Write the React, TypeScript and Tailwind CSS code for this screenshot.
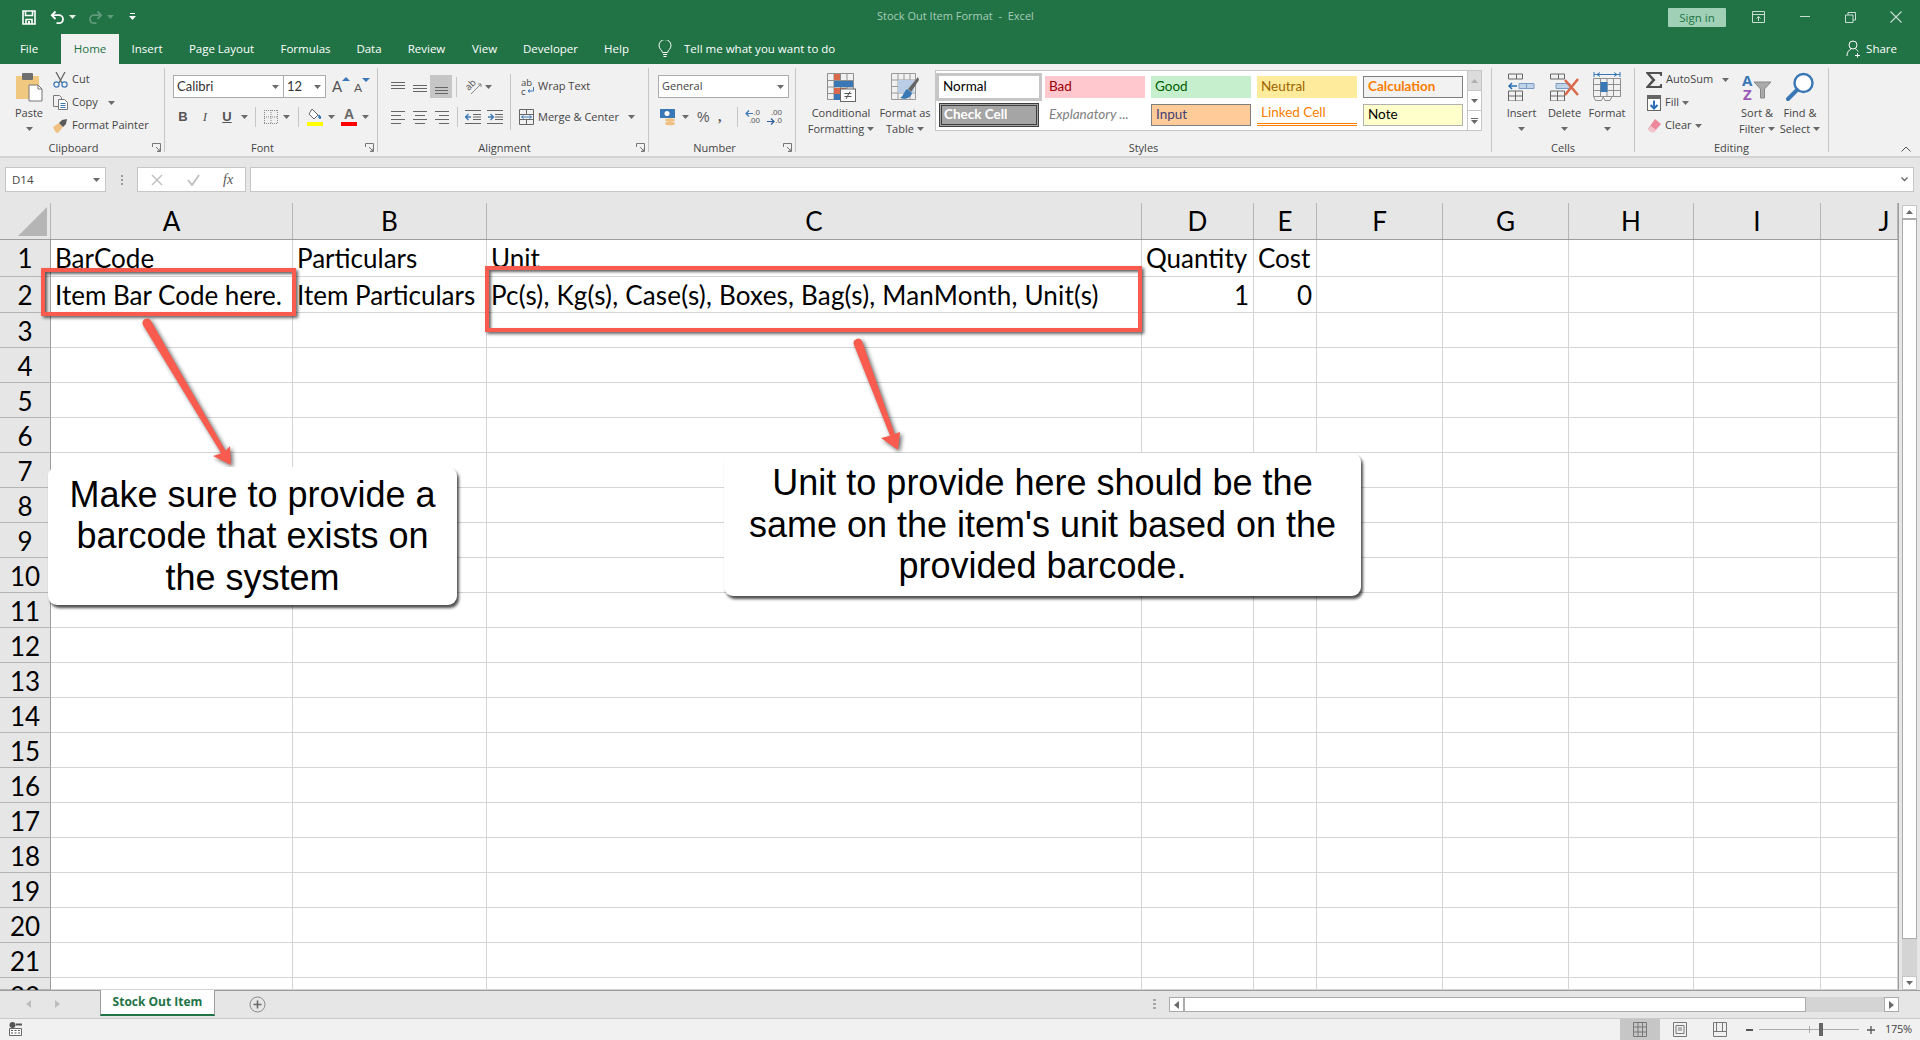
import React from "react";

const Caret = ({ c = "#6a6a6a" }: { c?: string }) => (
  <svg width="7" height="4" viewBox="0 0 7 4" className="shrink-0"><path d="M0 0h7L3.5 4z" fill={c} /></svg>
);
const Launcher = () => (
  <svg width="9" height="9" viewBox="0 0 9 9" fill="none" stroke="#777" strokeWidth="1"><path d="M.5 4V.5H8.5V8.5H5M4 4l4 4M8 5.5V8H5.5" /></svg>
);
const Lines = ({ ys, xs, c = "#666" }: { ys: number[]; xs: [number, number][]; c?: string }) => (
  <svg width="15" height="16" viewBox="0 0 15 16" stroke={c} strokeWidth="1" className="shrink-0">
    {ys.map((y, i) => <path key={i} d={`M${xs[i][0]} ${y + 0.5}H${xs[i][1]}`} />)}
  </svg>
);
const Sep = ({ h = "h-[20px]" }: { h?: string }) => <div className={`w-px bg-[#c6c6c6] shrink-0 ${h}`} />;

const Group = ({ w, label, launcher, children, pr = "pr-[17px]" }: { w: string; label: string; launcher?: boolean; children: React.ReactNode; pr?: string }) => (
  <div className={`${w} h-[84px] mt-[4px] border-r border-[#c6c6c6] shrink-0 flex flex-col`}>
    <div className="h-[72px] flex shrink-0">{children}</div>
    <div className={`relative h-[16px] leading-[16px] text-center text-[11px] text-[#444] shrink-0 ${launcher ? pr : ""}`}>
      {label}
      {launcher && <span className="absolute right-[3px] top-[3px] flex"><Launcher /></span>}
    </div>
  </div>
);

const BigBtn = ({ w, icon, l1, l2, mt = "mt-[4px]" }: { w: string; icon: React.ReactNode; l1: string; l2?: string; mt?: string }) => (
  <div className={`${w} shrink-0 flex flex-col items-center text-[11px] text-[#444]`}>
    <div className={`h-[30px] ${mt} flex items-center justify-center`}>{icon}</div>
    <div className="h-[16px] mt-[3px] leading-[16px] whitespace-nowrap">{l1}</div>
    {l2 ? (
      <div className="h-[16px] leading-[16px] whitespace-nowrap flex items-center gap-[3px]">{l2}<Caret /></div>
    ) : (
      <div className="h-[16px] flex items-center"><Caret /></div>
    )}
  </div>
);

const SmallRow = ({ icon, text, caret, caretMl = "ml-[3px]" }: { icon: React.ReactNode; text: string; caret?: boolean; caretMl?: string }) => (
  <div className="h-[23px] flex items-center text-[11px] text-[#444] whitespace-nowrap">
    <div className="w-[15px] flex justify-center shrink-0">{icon}</div>
    <span className="ml-[4px]">{text}</span>
    {caret && <span className={`${caretMl} flex`}><Caret /></span>}
  </div>
);

const TitleBar = () => (
  <div className="h-[34px] bg-[#217346] flex items-center shrink-0">
    <div className="w-[877px] flex items-center pl-[22px] shrink-0">
      <svg width="14" height="15" viewBox="0 0 14 15" fill="none" stroke="#fff" strokeWidth="1.6"><path d="M1 1h12v13H1zM3.5 1v4.500h7V1M4 14V9.500h6V14" /><path d="M6 11h2v3H6z" fill="#fff" stroke="none" /></svg>
      <svg className="ml-[14px]" width="15" height="15" viewBox="0 0 15 15" fill="none" stroke="#fff" strokeWidth="1.8"><path d="M5.500 1.500L1.800 5.200 5.500 9M2 5.200h7a4 4 0 0 1 0 8H6.500" /></svg>
      <span className="ml-[4px] flex"><Caret c="#e8f0ec" /></span>
      <svg className="ml-[12px]" width="15" height="15" viewBox="0 0 15 15" fill="none" stroke="#5f9a7c" strokeWidth="1.8"><path d="M9.500 1.500l3.700 3.700L9.500 9M13 5.200H6a4 4 0 0 0 0 8h2.500" /></svg>
      <span className="ml-[4px] flex"><Caret c="#5f9a7c" /></span>
      <svg className="ml-[15px]" width="7" height="8" viewBox="0 0 7 8" fill="#fff"><path d="M1 0h5v1H1zM0 3h7L3.500 7z" /></svg>
    </div>
    <div className="w-[170px] -mt-[2px] text-[11px] text-[#a6cdb8] whitespace-pre shrink-0">Stock Out Item Format  -  Excel</div>
    <div className="ml-[621px] w-[58px] h-[19px] rounded-[1px] bg-[#a0d1b6] text-[#217346] text-[11.5px] leading-[19px] text-center shrink-0">Sign in</div>
    <svg className="ml-[26px] shrink-0" width="13" height="12" viewBox="0 0 13 12" fill="none" stroke="#c9dfd3"><path d="M.5.500h12v11H.5zM.5 3.500h12M6.500 10V5.500M4.500 7.500l2-2 2 2" /></svg>
    <svg className="ml-[35px] shrink-0" width="11" height="2" viewBox="0 0 11 2"><path d="M0 .5h10" stroke="#c9dfd3" /></svg>
    <svg className="ml-[34px] shrink-0" width="11" height="11" viewBox="0 0 11 11" fill="none" stroke="#c9dfd3"><path d="M.5 3h7.500v7.500H.5zM3 3V.500h7.500V8H8" /></svg>
    <svg className="ml-[34px] shrink-0" width="12" height="12" viewBox="0 0 12 12" stroke="#c9dfd3" strokeWidth="1.1"><path d="M.5.500l11 11M11.500.500l-11 11" /></svg>
  </div>
);

const tabs: [string, string][] = [
  ["Insert", "w-[56px]"], ["Page Layout", "w-[93px]"], ["Formulas", "w-[75px]"], ["Data", "w-[52px]"], ["Review", "w-[63px]"],
  ["View", "w-[53px]"], ["Developer", "w-[79px]"], ["Help", "w-[53px]"],
];
const TabRow = () => (
  <div className="h-[30px] bg-[#217346] flex text-[11.5px] text-white shrink-0">
    <div className="w-[58px] mr-[3px] text-center leading-[30px]">File</div>
    <div className="w-[58px] bg-[#f1f1f1] text-[#217346] text-center leading-[30px]">Home</div>
    {tabs.map(([t, w]) => <div key={t} className={`${w} text-center leading-[30px] shrink-0`}>{t}</div>)}
    <div className="ml-[15px] mt-[6px] shrink-0">
      <svg width="14" height="18" viewBox="0 0 14 18" fill="none" stroke="#fff"><path d="M4.500 12.500C4 10 1 9 1 5.500a6 6 0 0 1 12 0c0 3.500-3 4.500-3.500 7zM5 14.500h4M5.500 16.500h3" /></svg>
    </div>
    <div className="ml-[12px] leading-[30px] whitespace-nowrap shrink-0">Tell me what you want to do</div>
    <div className="ml-auto mr-[23px] flex items-center">
      <svg width="15" height="18" viewBox="0 0 15 18" fill="none" stroke="#fff"><circle cx="7" cy="5" r="4" /><path d="M1 16c0-4 2-6 4-7M9.500 9c1 .5 2 1 2.500 2.500M11.500 13v4.500M9 15.500h5" /></svg>
      <span className="ml-[5px]">Share</span>
    </div>
  </div>
);

const PasteIcon = () => (
  <svg width="30" height="30" viewBox="0 0 30 30"><path d="M2 4h23v23H2z" fill="#f0c87f" /><rect x="8" y="1" width="11" height="7" rx="1" fill="#6f6f6f" /><path d="M15 13h9l4 4v12H15z" fill="#fff" stroke="#777" /><path d="M24 13v4h4" fill="none" stroke="#777" /></svg>
);
const Scissors = () => (
  <svg width="15" height="16" viewBox="0 0 15 16" fill="none"><path d="M3 0l6 11M12 0L6 11" stroke="#666" strokeWidth="1.3" /><circle cx="3.500" cy="12.500" r="2.600" stroke="#3a78b5" strokeWidth="1.2" /><circle cx="11.500" cy="12.500" r="2.600" stroke="#3a78b5" strokeWidth="1.2" /></svg>
);
const CopyIcon = () => (
  <svg width="15" height="15" viewBox="0 0 15 15" fill="none" stroke="#777"><path d="M.5.500h6l2 2v9h-8z" fill="#f1f1f1" /><path d="M5.500 4.500h6l3 3v7h-9z" fill="#fff" /><path d="M7.500 8.500h5M7.500 10.500h5M7.500 12.500h5" stroke="#3a78b5" /></svg>
);
const Brush = () => (
  <svg width="15" height="14" viewBox="0 0 15 14"><path d="M0 8l6-4 4 4-5 6c-2 0-4-3-5-6z" fill="#f0c080" /><path d="M6 4l3-3 5-1-1 5-3 3z" fill="#5a5a5a" /></svg>
);

const Clipboard = () => (
  <Group w="w-[165px]" label="Clipboard" launcher>
    <div className="w-[48px] ml-[5px] shrink-0"><BigBtn w="w-full" icon={<PasteIcon />} l1="Paste" /></div>
    <div className="flex flex-col">
      <SmallRow icon={<Scissors />} text="Cut" />
      <SmallRow icon={<CopyIcon />} text="Copy" caret caretMl="ml-[10px]" />
      <SmallRow icon={<Brush />} text="Format Painter" />
    </div>
  </Group>
);

const Box = ({ w, text, font = "" }: { w: string; text: string; font?: string }) => (
  <div className={`${w} h-[23px] bg-white border border-[#ababab] flex items-center justify-between pl-[3px] pr-[4px] shrink-0 ${font}`}>
    <span>{text}</span><Caret />
  </div>
);

const BorderIcon = () => (
  <svg width="14" height="14" viewBox="0 0 14 14" stroke="#8a8a8a" strokeDasharray="1 1" fill="none"><path d="M.5 0v14M7 0v14M13.500 0v14M0 .500h14M0 7h14M0 13.500h14" /></svg>
);
const Font = () => (
  <Group w="w-[213px]" label="Font" launcher>
    <div className="pl-[8px] flex flex-col">
      <div className="mt-[7px] h-[23px] flex items-center">
        <Box w="w-[111px]" text="Calibri" font="[font-family:Lato,sans-serif] text-[13px] text-[#333]" />
        <Box w="w-[43px] -ml-px" text="12" font="[font-family:Lato,sans-serif] text-[13px] text-[#333]" />
        <span className="ml-[6px] relative w-[14px] text-[15px] leading-[15px] [font-family:Lato,sans-serif] text-[#555]">A<span className="absolute -right-[4px] -top-[2px] w-0 h-0 border-x-[4px] border-x-transparent border-b-[4px] border-b-[#3a78b5]" /></span>
        <span className="ml-[8px] relative w-[14px] text-[12px] leading-[14px] mt-[2px] [font-family:Lato,sans-serif] text-[#555]">A<span className="absolute -right-[2px] -top-[3px] w-0 h-0 border-x-[4px] border-x-transparent border-t-[4px] border-t-[#3a78b5]" /></span>
      </div>
      <div className="mt-[7px] h-[24px] -ml-[1px] flex items-center text-[#555] text-[13px] [font-family:Liberation_Sans,sans-serif]">
        <div className="w-[22px] text-center font-bold">B</div>
        <div className="w-[22px] text-center italic [font-family:Liberation_Serif,serif]">I</div>
        <div className="w-[22px] text-center font-bold underline">U</div>
        <div className="w-[12px] flex justify-center"><Caret /></div>
        <div className="ml-[5px]"><Sep /></div>
        <div className="ml-[8px]"><BorderIcon /></div>
        <div className="ml-[5px]"><Caret /></div>
        <div className="ml-[8px]"><Sep /></div>
        <div className="ml-[8px] w-[16px] flex flex-col items-center">
          <svg width="16" height="13" viewBox="0 0 16 13" fill="none" stroke="#666"><path d="M5 1l6 6-4 4-5-5z" fill="#fff" /><path d="M12 7c2 1 2 3 1 4-1-1-2-2-1-4z" fill="#3a78b5" stroke="#3a78b5" /></svg>
          <div className="w-[16px] h-[4px] bg-[#ffff00] mt-[1px]" />
        </div>
        <div className="ml-[5px]"><Caret /></div>
        <div className="ml-[6px] w-[16px] flex flex-col items-center">
          <span className="text-[14px] leading-[13px] h-[13px] font-bold text-[#666]">A</span>
          <div className="w-[16px] h-[4px] bg-[#ff0000] mt-[1px]" />
        </div>
        <div className="ml-[5px]"><Caret /></div>
      </div>
    </div>
  </Group>
);

const WrapIcon = () => (
  <div className="relative w-[14px] h-[18px] text-[9.5px] leading-[9px] text-[#444]">
    <div>ab</div><div>c</div>
    <svg className="absolute left-[6px] top-[8px]" width="8" height="8" viewBox="0 0 8 8" fill="none" stroke="#3a78b5"><path d="M1 5h5.500V1M1 5l2-1.500M1 5l2 1.500" /></svg>
  </div>
);
const MergeIcon = () => (
  <svg width="15" height="16" viewBox="0 0 15 16" fill="none" stroke="#666"><path d="M.5.500h14v15H.5zM.5 5.500h14M.5 10.500h14M7.500.500v5M7.500 10.500v5" /><path d="M2.500 8h10M2.500 8l2-1.500M2.500 8l2 1.500M12.500 8l-2-1.500M12.500 8l-2 1.500" stroke="#3a78b5" /></svg>
);
const Indent = ({ flip }: { flip?: boolean }) => (
  <svg width="16" height="16" viewBox="0 0 16 16" stroke="#666" fill="none">
    <path d="M0 1.500h16M0 14.500h16" />
    <path d="M8 5.500h8M8 8h8M8 10.500h8" />
    <path d={flip ? "M1 8h5M3.500 5L6.500 8l-3 3" : "M6 8H1M3.500 5L.5 8l3 3"} stroke="#3a78b5" strokeWidth="1.300" />
  </svg>
);
const Alignment = () => (
  <Group w="w-[271px]" label="Alignment" launcher>
    <div className="pl-[13px] w-[132px] shrink-0 flex flex-col">
      <div className="mt-[7px] h-[23px] flex items-center">
        <Lines ys={[3, 6, 9]} xs={[[0, 14], [0, 14], [0, 14]]} />
        <div className="ml-[7px]"><Lines ys={[6, 9, 12]} xs={[[0, 14], [0, 14], [0, 14]]} /></div>
        <div className="ml-[2px] w-[22px] h-[23px] bg-[#c6c6c6] flex items-center justify-center shrink-0"><Lines ys={[8, 11, 14]} xs={[[1, 14], [1, 14], [1, 14]]} /></div>
        <div className="ml-[4px]"><Sep /></div>
        <div className="ml-[7px] relative w-[18px] h-[16px] shrink-0">
          <span className="absolute left-[1px] top-[1px] text-[9.5px] leading-[10px] text-[#555] -rotate-45">ab</span>
          <svg className="absolute left-0 top-0" width="18" height="16" viewBox="0 0 18 16" fill="none"><path d="M7 15L17 5M17 5h-3M17 5v3" stroke="#888" /></svg>
        </div>
        <div className="ml-[3px]"><Caret /></div>
      </div>
      <div className="mt-[7px] h-[24px] flex items-center">
        <Lines ys={[2, 6, 10, 14]} xs={[[0, 14], [0, 10], [0, 14], [0, 10]]} />
        <div className="ml-[7px]"><Lines ys={[2, 6, 10, 14]} xs={[[0, 14], [2, 12], [0, 14], [2, 12]]} /></div>
        <div className="ml-[7px]"><Lines ys={[2, 6, 10, 14]} xs={[[0, 14], [4, 14], [0, 14], [4, 14]]} /></div>
        <div className="ml-[7px]"><Sep /></div>
        <div className="ml-[7px]"><Indent /></div>
        <div className="ml-[6px]"><Indent flip /></div>
      </div>
    </div>
    <div className="w-px h-[56px] mt-[6px] bg-[#c6c6c6] shrink-0" />
    <div className="pl-[8px] flex flex-col text-[11px] text-[#444]">
      <div className="mt-[7px] h-[23px] flex items-center whitespace-nowrap"><div className="w-[15px] pl-[2px]"><WrapIcon /></div><span className="ml-[4px]">Wrap Text</span></div>
      <div className="mt-[7px] h-[24px] flex items-center whitespace-nowrap"><MergeIcon /><span className="ml-[4px]">Merge &amp; Center</span><span className="ml-[9px] flex"><Caret /></span></div>
    </div>
  </Group>
);

const Number_ = () => (
  <Group w="w-[147px]" label="Number" launcher pr="pr-[15px]">
    <div className="pl-[9px] flex flex-col">
      <div className="mt-[7px]"><Box w="w-[131px]" text="General" font="text-[11px] text-[#444]" /></div>
      <div className="mt-[7px] h-[24px] flex items-center">
        <svg className="ml-[2px] shrink-0" width="17" height="17" viewBox="0 0 17 17"><rect x="0" y="0" width="15" height="9" fill="#3a78b5" /><circle cx="7" cy="4.500" r="2.500" fill="#fff" /><ellipse cx="10" cy="11" rx="5" ry="1.800" fill="#f0c080" /><ellipse cx="10" cy="14.500" rx="5" ry="1.800" fill="#f0c080" /></svg>
        <div className="ml-[5px]"><Caret /></div>
        <div className="ml-[8px] w-[12px] text-[14px] text-[#555] [font-family:Liberation_Sans,sans-serif] leading-[16px]">%</div>
        <div className="ml-[9px] w-[8px] text-[14px] text-[#555] font-bold leading-[10px] [font-family:Liberation_Serif,serif]">,</div>
        <div className="ml-[11px]"><Sep /></div>
        <div className="ml-[7px] w-[15px] relative h-[16px] text-[8px] leading-[8px] text-[#555] [font-family:Liberation_Sans,sans-serif] text-right">
          .0<br />.00
          <svg className="absolute left-0 top-[1px]" width="8" height="7" viewBox="0 0 8 7" fill="none" stroke="#3a78b5" strokeWidth="1.200"><path d="M8 3.500H1M4 .500l-3 3 3 3" /></svg>
        </div>
        <div className="ml-[7px] w-[15px] relative h-[16px] text-[8px] leading-[8px] text-[#555] [font-family:Liberation_Sans,sans-serif] text-right">
          .00<br />.0
          <svg className="absolute left-0 bottom-[0px]" width="8" height="7" viewBox="0 0 8 7" fill="none" stroke="#2a5c9a" strokeWidth="1.200"><path d="M0 3.500h7M4 .500l3 3-3 3" /></svg>
        </div>
      </div>
    </div>
  </Group>
);

const CondIcon = () => (
  <svg width="30" height="30" viewBox="0 0 30 30" fill="none">
    <path d="M1.500 1.500h26v26h-26zM1.500 8.500h26M1.500 15h26M1.500 21.500h26M8 1.500v26M14.500 1.500v26M21 1.500v26" stroke="#8f8f8f" />
    <rect x="8" y="2" width="6" height="6" fill="#d9694a" /><rect x="8" y="9" width="19" height="6" fill="#3a78b5" /><rect x="8" y="16" width="12" height="6" fill="#d9694a" /><rect x="8" y="22" width="6" height="6" fill="#3a78b5" />
    <rect x="14.500" y="17" width="15" height="12.500" fill="#fff" stroke="#666" />
    <path d="M18.500 21.500h7M18.500 24.500h7M24 19.500l-4 7.500" stroke="#555" />
  </svg>
);
const TableIcon = () => (
  <svg width="28" height="30" viewBox="0 0 28 30" fill="none">
    <path d="M.500 1.500h24v26H.500zM.500 8h24M.500 14.500h24M.500 21h24M7 1.500v26M13 1.500v26M19 1.500v26" stroke="#9a9a9a" />
    <rect x="7" y="8" width="16" height="13" fill="#b9cde4" />
    <path d="M27 5L17 17l3 3L28 8z" fill="#666" />
    <path d="M16 17c-3 2-3 7-7 9 5 2 11 0 12-5z" fill="#3a78b5" />
  </svg>
);

const Sc = ({ cls, children }: { cls: string; children: React.ReactNode }) => (
  <div className={`h-[22px] w-[100px] flex items-center pl-[4px] pb-[2px] text-[13.5px] [font-family:Lato,sans-serif] whitespace-nowrap ${cls}`}>{children}</div>
);

const Styles = () => (
  <Group w="w-[696px]" label="Styles">
    <div className="pl-[10px] flex">
      <BigBtn w="w-[70px]" icon={<CondIcon />} l1="Conditional" l2="Formatting" />
      <BigBtn w="w-[58px]" icon={<TableIcon />} l1="Format as" l2="Table" />
      <div className="ml-[1px] mt-[2px] w-[547px] h-[61px] bg-white border border-[#c6c6c6] flex justify-between">
        <div className="pl-[3px] pt-[5px] grid grid-cols-[100px_100px_100px_100px_100px] auto-rows-[22px] gap-x-[6px] gap-y-[6px]">
          <Sc cls="outline-[3px] outline-solid outline-[#c6c6c6] text-black bg-white">Normal</Sc>
          <Sc cls="bg-[#ffc7ce] text-[#9c0006]">Bad</Sc>
          <Sc cls="bg-[#c6efce] text-[#006100]">Good</Sc>
          <Sc cls="bg-[#ffeb9c] text-[#9c6500]">Neutral</Sc>
          <Sc cls="bg-[#f2f2f2] border border-[#7f7f7f] text-[#fa7d00] font-bold">Calculation</Sc>
          <div className="h-[24px] -mt-[1px] w-[100px] border-[3px] border-double border-[#3f3f3f] bg-[#a5a5a5] text-white font-bold text-[13.5px] [font-family:Lato,sans-serif] leading-[17px] pl-[2px]">Check Cell</div>
          <Sc cls="text-[#7f7f7f] italic">Explanatory ...</Sc>
          <Sc cls="bg-[#ffcc99] border border-[#7f7f7f] text-[#3f3f76]">Input</Sc>
          <Sc cls="text-[#fa7d00] border-b-[3px] border-double border-[#ff8001]">Linked Cell</Sc>
          <Sc cls="bg-[#ffffcc] border border-[#b2b2b2] text-black">Note</Sc>
        </div>
        <div className="w-[14px] flex flex-col border-l border-[#c6c6c6]">
          <div className="h-[20px] bg-[#dcdcdc] flex items-center justify-center border-b border-[#c6c6c6]"><svg width="7" height="4" viewBox="0 0 7 4"><path d="M0 4h7L3.500 0z" fill="#b0b0b0" /></svg></div>
          <div className="h-[20px] flex items-center justify-center border-b border-[#c6c6c6]"><Caret /></div>
          <div className="flex-1 flex flex-col items-center justify-center gap-[1px]"><div className="w-[7px] h-px bg-[#6a6a6a]" /><Caret /></div>
        </div>
      </div>
    </div>
  </Group>
);

const InsIcon = () => (
  <svg width="27" height="28" viewBox="0 0 27 28" fill="none" stroke="#666">
    <path d="M.500 1h8v5h-8zM8.500 1h6v5h-6zM.500 18h14v10h-14zM7.500 18v10M.500 23h14" />
    <path d="M11 10.500h15v5H11zM18.500 10.500v5" fill="#c1d3e8" stroke="#7a9cc4" />
    <path d="M9 13H1M4 10l-3 3 3 3" stroke="#2a6fb5" strokeWidth="1.500" />
  </svg>
);
const DelIcon = () => (
  <svg width="30" height="28" viewBox="0 0 30 28" fill="none" stroke="#666">
    <path d="M.500 1h8v5h-8zM8.500 1h6v5h-6zM.500 18h14v10h-14zM7.500 18v10M.500 23h14" />
    <path d="M6 10.500h14v5H6z" fill="#c1d3e8" stroke="#7a9cc4" />
    <path d="M15 7l13 15M28 6L15 22" stroke="#d9694a" strokeWidth="2.500" />
  </svg>
);
const FmtIcon = () => (
  <svg width="28" height="30" viewBox="0 0 28 30" fill="none">
    <path d="M1 2.500h26M1 0v5M27 0v5M4 2.500l3-2M4 2.500l3 2M24 2.500l-3-2M24 2.500l-3 2" stroke="#3a78b5" />
    <path d="M.500 6.500h27v18H.500zM.500 12.500h27M.500 18.500h27M7.500 6.500v18M14 6.500v18M20.500 6.500v18" stroke="#8f8f8f" />
    <rect x="7.500" y="10" width="7" height="10" fill="#3a78b5" />
    <path d="M.500 24.500l2 4h6l2-4M10 24.500l2 4h5l2-4" stroke="#8f8f8f" />
  </svg>
);
const Cells = () => (
  <Group w="w-[143px]" label="Cells">
    <div className="pl-[8px] flex">
      <BigBtn w="w-[43px]" icon={<InsIcon />} l1="Insert" />
      <BigBtn w="w-[43px]" icon={<DelIcon />} l1="Delete" />
      <BigBtn w="w-[42px]" icon={<FmtIcon />} l1="Format" />
    </div>
  </Group>
);

const Sigma = () => (
  <svg width="17" height="16" viewBox="0 0 17 16"><path d="M0 0h16v4h-1.500l-1-2H4l5.500 6L4 14h9.500l1-2H16v4H0v-1l6-7L0 1z" fill="#505050" /></svg>
);
const FillIcon = () => (
  <svg width="14" height="16" viewBox="0 0 14 16" fill="none"><rect x=".5" y=".5" width="13" height="15" fill="#fff" stroke="#666" /><rect x="0" y="0" width="14" height="4" fill="#666" /><path d="M7 5.500v8M3.500 10L7 13.500 10.500 10" stroke="#2a6fb5" strokeWidth="2" /></svg>
);
const Eraser = () => (
  <svg width="14" height="14" viewBox="0 0 14 14"><path d="M8 0l6 5-7 8c-2 1-5-1-6-3z" fill="#ec8a9b" /><path d="M1 10l3-3 5 4-2 2c-2 1-5-1-6-3z" fill="#f4c4cc" /></svg>
);
const SortIcon = () => (
  <div className="relative w-[30px] h-[29px] font-bold text-[15px] leading-[15px]">
    <span className="absolute left-0 top-0 text-[#3a78b5]">A</span>
    <span className="absolute left-[1px] top-[14px] text-[#9b59b6]">Z</span>
    <svg className="absolute left-0 top-0" width="30" height="28" viewBox="0 0 30 28" fill="none"><path d="M12 9h17l-6.500 7v9h-4v-9z" fill="#aaa" stroke="#888" /></svg>
  </div>
);
const FindIcon = () => (
  <svg width="28" height="30" viewBox="0 0 28 30" fill="none">
    <circle cx="17.500" cy="11" r="9" stroke="#3a78b5" strokeWidth="2.400" fill="#fff" />
    <path d="M11 18L2 27" stroke="#3a78b5" strokeWidth="4" strokeLinecap="round" />
  </svg>
);
const Editing = () => (
  <Group w="w-[194px]" label="Editing">
    <div className="ml-[11px] w-[93px] flex flex-col shrink-0">
      <div className="h-[23px] flex items-center text-[11px] text-[#444]"><Sigma /><span className="ml-[3px]">AutoSum</span><span className="ml-[9px] flex"><Caret /></span></div>
      <SmallRow icon={<FillIcon />} text="Fill" caret />
      <SmallRow icon={<Eraser />} text="Clear" caret />
    </div>
    <BigBtn w="w-[36px]" icon={<SortIcon />} l1="Sort &" l2="Filter" />
    <BigBtn w="w-[50px]" icon={<FindIcon />} l1="Find &" l2="Select" />
  </Group>
);

const Ribbon = () => (
  <div className="h-[94px] bg-[#f1f1f1] border-b-2 border-[#d4d4d4] flex shrink-0 relative">
    <Clipboard /><Font /><Alignment /><Number_ /><Styles /><Cells /><Editing />
    <div className="ml-auto mr-[9px] mt-[82px]">
      <svg width="10" height="6" viewBox="0 0 10 6" fill="none" stroke="#555"><path d="M.5 5.500L5 1l4.500 4.500" /></svg>
    </div>
  </div>
);

const FormulaBar = () => (
  <div className="h-[45px] bg-[#e6e6e6] flex items-start pt-[9px] shrink-0">
    <div className="ml-[5px] w-[101px] h-[25px] bg-white border border-[#c6c6c6] flex items-center justify-between pl-[6px] pr-[5px] text-[11.5px] text-[#444]">
      <span>D14</span><Caret />
    </div>
    <div className="w-[31px] h-[25px] flex flex-col items-center justify-center gap-[2px]">
      <div className="w-[2px] h-[2px] bg-[#9a9a9a]" /><div className="w-[2px] h-[2px] bg-[#9a9a9a]" /><div className="w-[2px] h-[2px] bg-[#9a9a9a]" />
    </div>
    <div className="w-[109px] h-[25px] bg-white border border-[#c6c6c6] flex items-center pl-[13px] shrink-0">
      <svg width="12" height="12" viewBox="0 0 12 12" stroke="#c2c2c2" strokeWidth="1.500"><path d="M1 1l10 10M11 1L1 11" /></svg>
      <svg className="ml-[24px]" width="13" height="12" viewBox="0 0 13 12" fill="none" stroke="#c2c2c2" strokeWidth="2"><path d="M1 6l4 5 7-10" /></svg>
      <span className="ml-[23px] italic text-[14px] text-[#555] [font-family:Liberation_Serif,serif]">fx</span>
    </div>
    <div className="ml-[4px] w-[1664px] h-[25px] bg-white border border-[#c6c6c6] flex items-center justify-end pr-[5px]">
      <svg width="7" height="5" viewBox="0 0 7 5" fill="none" stroke="#666" strokeWidth="1.300"><path d="M.5.500l3 3 3-3" /></svg>
    </div>
  </div>
);

const cols: [string, string][] = [
  ["A", "w-[242px]"], ["B", "w-[194px]"], ["C", "w-[655px]"], ["D", "w-[112px]"], ["E", "w-[63px]"],
  ["F", "w-[126px]"], ["G", "w-[126px]"], ["H", "w-[125px]"], ["I", "w-[127px]"], ["J", "w-[77px]"],
];
const rowH: Record<number, string> = { 1: "h-[37px]", 2: "h-[36px]", 22: "h-[12px]" };
const data: Record<number, Record<string, [string, string]>> = {
  1: { A: ["BarCode", "pl-[4px]"], B: ["Particulars", "pl-[4px]"], C: ["Unit", "pl-[4px]"], D: ["Quantity", "pl-[4px]"], E: ["Cost", "pl-[4px]"] },
  2: {
    A: ["Item Bar Code here.", "pl-[4px]"],
    B: ["Item Particulars", "pl-[4px]"],
    C: ["Pc(s), Kg(s), Case(s), Boxes, Bag(s), ManMonth, Unit(s)", "pl-[4px] tracking-[0.2px]"],
    D: ["1", "text-right pr-[4px]"],
    E: ["0", "text-right pr-[4px]"],
  },
};
const rows = Array.from({ length: 22 }, (_, i) => i + 1);

const Sheet = () => (
  <div className="h-[787px] flex shrink-0 bg-[#e6e6e6]">
    <div className="w-[1899px] shrink-0 flex flex-col overflow-hidden border-r border-[#9d9d9d] [font-family:Lato,sans-serif] text-[26px] text-black">
      <div className="h-[37px] flex shrink-0 border-b border-[#9d9d9d] bg-[#e6e6e6]">
        <div className="w-[51px] h-full relative border-r border-[#b5b5b5] shrink-0">
          <svg className="absolute left-[18px] top-[4px]" width="29" height="29" viewBox="0 0 29 29"><path d="M29 0v29H0z" fill="#b5b5b5" /></svg>
        </div>
        {cols.map(([c, w]) => (
          <div key={c} className={`${w} shrink-0 border-r border-[#b5b5b5] overflow-hidden`}>
            <div className={`${c === "J" ? "w-[126px]" : "w-full"} text-center leading-[36px]`}>{c}</div>
          </div>
        ))}
      </div>
      {rows.map((r) => (
        <div key={r} className={`${rowH[r] ?? "h-[35px]"} flex shrink-0 overflow-hidden`}>
          <div className="w-[51px] shrink-0 bg-[#e6e6e6] border-r border-r-[#9d9d9d] border-b border-b-[#b5b5b5] text-center leading-[37px]">{r}</div>
          {cols.map(([c, w]) => {
            const d = data[r]?.[c];
            return (
              <div key={c} className={`${w} shrink-0 bg-white border-r border-b border-[#d4d4d4] leading-[37px] whitespace-nowrap ${d?.[1] ?? ""}`}>
                {d?.[0]}
              </div>
            );
          })}
        </div>
      ))}
    </div>
    <div className="flex-1 pl-[3px] pr-[3px] flex flex-col bg-[#e6e6e6] pt-[2px]">
      <div className="h-[14px] bg-white border border-[#c6c6c6] border-b-[#ababab] flex items-center justify-center"><svg width="7" height="4" viewBox="0 0 7 4"><path d="M0 4h7L3.500 0z" fill="#6a6a6a" /></svg></div>
      <div className="h-[720px] bg-white border border-[#ababab]" />
      <div className="flex-1 bg-[#d4d4d4]" />
      <div className="h-[14px] bg-white border border-[#c6c6c6] flex items-center justify-center"><Caret /></div>
    </div>
  </div>
);

const TabBar = () => (
  <div className="h-[28px] bg-[#e6e6e6] border-t border-[#9d9d9d] flex items-start shrink-0">
    <div className="ml-[26px] mt-[9px] w-0 h-0 border-y-[4px] border-y-transparent border-r-[5px] border-r-[#bdbdbd]" />
    <div className="ml-[24px] mt-[9px] w-0 h-0 border-y-[4px] border-y-transparent border-l-[5px] border-l-[#bdbdbd]" />
    <div className="ml-[40px] -mt-px w-[115px] h-[26px] bg-white border-x border-[#9d9d9d] border-b-[2px] border-b-[#217346] text-center text-[12px] leading-[24px] font-bold text-[#217346] shrink-0">Stock Out Item</div>
    <div className="ml-[34px] mt-[5px] shrink-0">
      <svg width="17" height="17" viewBox="0 0 17 17" fill="none"><circle cx="8.500" cy="8.500" r="7.500" stroke="#8a8a8a" /><path d="M8.500 4.500v8M4.500 8.500h8" stroke="#6a6a6a" strokeWidth="1.600" /></svg>
    </div>
    <div className="ml-[887px] mt-[8px] w-[3px] flex flex-col gap-[2px] shrink-0">
      <div className="h-[2px] bg-[#a8a8a8]" /><div className="h-[2px] bg-[#a8a8a8]" /><div className="h-[2px] bg-[#a8a8a8]" />
    </div>
    <div className="ml-[13px] mt-[6px] w-[15px] h-[15px] bg-white border border-[#ababab] flex items-center justify-center shrink-0">
      <div className="w-0 h-0 border-y-[4px] border-y-transparent border-r-[5px] border-r-[#6a6a6a]" />
    </div>
    <div className="mt-[6px] w-[622px] h-[15px] bg-white border border-[#ababab] shrink-0" />
    <div className="mt-[6px] w-[78px] h-[15px] bg-[#d4d4d4] shrink-0" />
    <div className="mt-[6px] w-[15px] h-[15px] bg-white border border-[#ababab] flex items-center justify-center shrink-0">
      <div className="w-0 h-0 border-y-[4px] border-y-transparent border-l-[5px] border-l-[#6a6a6a]" />
    </div>
  </div>
);

const StatusBar = () => (
  <div className="h-[22px] bg-[#f1f1f1] border-t border-[#c8c8c8] flex items-stretch shrink-0">
    <div className="ml-[9px] mt-[3px]">
      <svg width="13" height="14" viewBox="0 0 13 14" fill="none"><circle cx="3.500" cy="3" r="3" fill="#555" /><path d="M7 1.500h6v2H7z" fill="#555" /><path d="M.5 6.500h12v7H.5z" stroke="#666" fill="#fff" /><path d="M2 8.500h2M5.500 8.500h2M9 8.500h2M2 11h2M5.500 11h2M9 11h2" stroke="#555" /></svg>
    </div>
    <div className="ml-auto flex items-center">
      <div className="w-[40px] h-[21px] bg-[#c6c6c6] flex items-center justify-center">
        <svg width="14" height="15" viewBox="0 0 14 15" fill="none" stroke="#777"><path d="M.5.500h13v14H.5zM.5 5h13M.5 10h13M5 .500v14M9.500.500v14" /></svg>
      </div>
      <svg className="ml-[13px]" width="14" height="15" viewBox="0 0 14 15" fill="none" stroke="#777"><path d="M.5.500h13v14H.5z" /><path d="M3 3.500h8v8H3zM5 6h4M5 8h4" /></svg>
      <svg className="ml-[26px]" width="14" height="15" viewBox="0 0 14 15" fill="none" stroke="#777"><path d="M.5.500h13v14H.5zM.5 9.500h13M3.500.500v9M9.500.500v9" /></svg>
      <div className="ml-[19px] w-[7px] h-[2px] bg-[#555]" />
      <div className="ml-[6px] w-[100px] h-px bg-[#aaa] relative">
        <div className="absolute left-[50px] -top-[3px] w-px h-[7px] bg-[#aaa]" />
        <div className="absolute left-[60px] -top-[6px] w-[4px] h-[13px] bg-[#666]" />
      </div>
      <svg className="ml-[8px]" width="8" height="8" viewBox="0 0 8 8" stroke="#555" strokeWidth="1.300"><path d="M4 0v8M0 4h8" /></svg>
      <span className="ml-[10px] mr-[8px] w-[27px] text-[11px] tracking-tight whitespace-nowrap text-[#444]">175%</span>
    </div>
  </div>
);

const RED = "#f95b4e";
const Arrow1 = () => (
  <svg className="absolute left-[130px] top-[310px] drop-shadow-[2px_2px_2px_rgba(0,0,0,0.6)]" width="120" height="170" viewBox="130 310 120 170">
    <path d="M143.100 325.300A4.500 4.500 0 0 1 150.900 320.700L225.600 450.700L230 446L231 465L213 456L221.200 453.300Z" fill={RED} />
  </svg>
);
const Arrow2 = () => (
  <svg className="absolute left-[840px] top-[330px] drop-shadow-[2px_2px_2px_rgba(0,0,0,0.6)]" width="80" height="130" viewBox="840 330 80 130">
    <path d="M853.800 344.600A4.500 4.500 0 0 1 862.200 341.400L894.700 433.900L900 432L898 450L881 438L890.100 435.700Z" fill={RED} />
  </svg>
);

export default function App() {
  return (
    <div className="relative w-[1920px] h-[1040px] overflow-hidden flex flex-col [font-family:Open_Sans,sans-serif] bg-[#e6e6e6]">
      <TitleBar />
      <TabRow />
      <Ribbon />
      <FormulaBar />
      <Sheet />
      <TabBar />
      <StatusBar />

      <div className="absolute left-[41px] top-[268px] w-[255px] h-[48px] border-[4px] border-[#f95b4e] shadow-[2px_2px_3px_rgba(0,0,0,0.6),inset_2px_2px_3px_rgba(0,0,0,0.6)]" />
      <div className="absolute left-[485px] top-[266px] w-[657px] h-[66px] border-[4px] border-[#f95b4e] shadow-[2px_2px_3px_rgba(0,0,0,0.6),inset_2px_2px_3px_rgba(0,0,0,0.6)]" />
      <Arrow1 />
      <Arrow2 />
      <div className="absolute left-[48px] top-[467px] w-[409px] h-[138px] rounded-[9px] bg-white shadow-[2px_3px_3px_rgba(0,0,0,0.7)] flex items-center justify-center text-center text-[36px] leading-[41.5px] text-black [font-family:Liberation_Sans,Arial,sans-serif]">
        <div>Make sure to provide a<br />barcode that exists on<br />the system</div>
      </div>
      <div className="absolute left-[724px] top-[453px] w-[637px] h-[143px] rounded-[9px] bg-white shadow-[2px_3px_3px_rgba(0,0,0,0.7)] flex items-center justify-center text-center text-[36px] leading-[41.5px] text-black [font-family:Liberation_Sans,Arial,sans-serif]">
        <div>Unit to provide here should be the<br />same on the item's unit based on the<br />provided barcode.</div>
      </div>
    </div>
  );
}
